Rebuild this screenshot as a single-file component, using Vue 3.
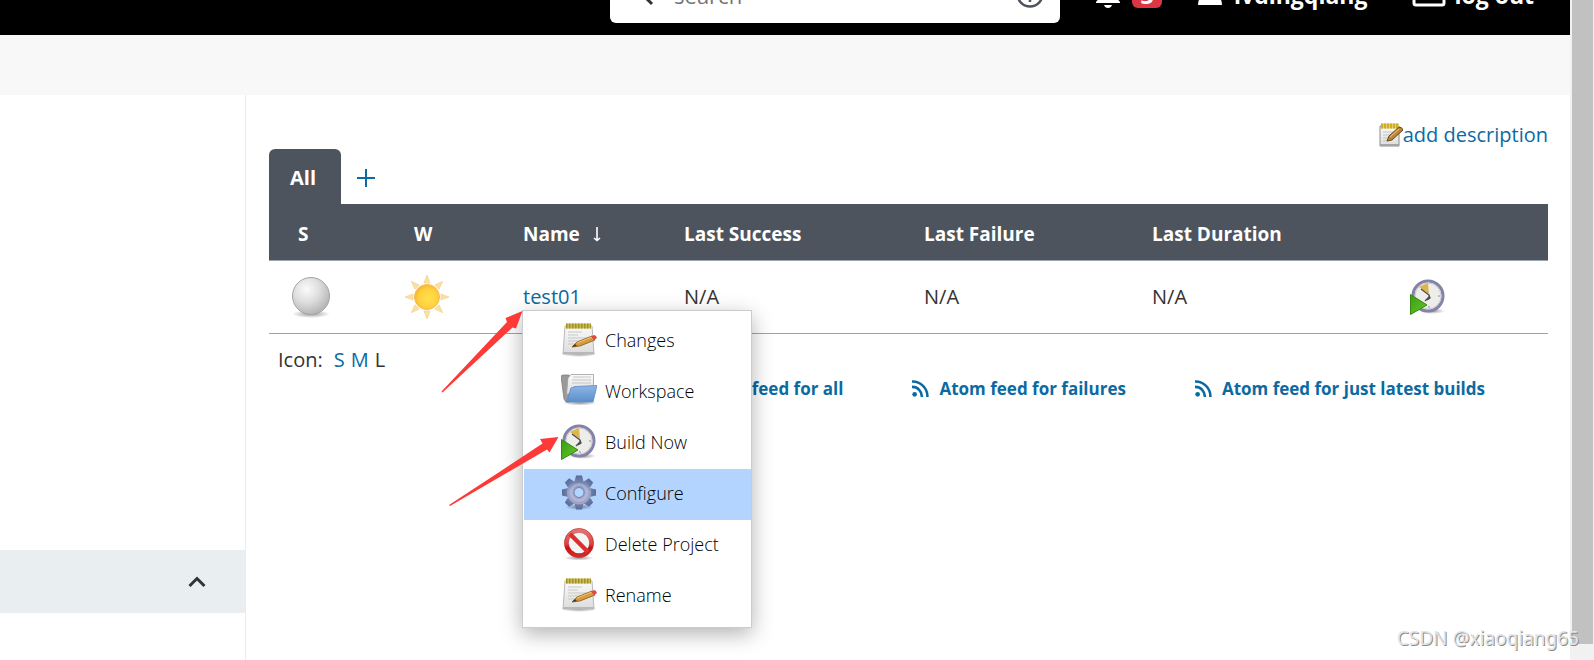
<script setup>
import { ref } from 'vue'

const search = ref('')
const activeItem = ref('Configure')

const columns = [
  { key: 's', label: 'S', icon: true },
  { key: 'w', label: 'W', icon: true },
  { key: 'name', label: 'Name', sorted: true },
  { key: 'success', label: 'Last Success' },
  { key: 'failure', label: 'Last Failure' },
  { key: 'duration', label: 'Last Duration' },
  { key: 'build', label: '' },
]

const menuItems = [
  { label: 'Changes', icon: 'notepad' },
  { label: 'Workspace', icon: 'folder' },
  { label: 'Build Now', icon: 'clock' },
  { label: 'Configure', icon: 'gear' },
  { label: 'Delete Project', icon: 'delete' },
  { label: 'Rename', icon: 'notepad' },
]

const feeds = ['Atom feed for all', 'Atom feed for failures', 'Atom feed for just latest builds']
const gearTeeth = [0, 45, 90, 135, 180, 225, 270, 315]
</script>

<template>
  <div class="page">
    <!-- shared icon shapes -->
    <svg class="defs" width="0" height="0" aria-hidden="true">
      <defs>
        <linearGradient id="paper" x1="0" y1="0" x2="0" y2="1">
          <stop offset="0" stop-color="#fafafa" />
          <stop offset="1" stop-color="#dcdcdc" />
        </linearGradient>
        <linearGradient id="folderFront" x1="0" y1="0" x2="0" y2="1">
          <stop offset="0" stop-color="#8fb6e2" />
          <stop offset="1" stop-color="#5a8fcd" />
        </linearGradient>
        <linearGradient id="green" x1="0" y1="0" x2="1" y2="1">
          <stop offset="0" stop-color="#3c9a12" />
          <stop offset="1" stop-color="#62cc2a" />
        </linearGradient>
        <linearGradient id="gearFill" x1="0" y1="0" x2="0" y2="36" gradientUnits="userSpaceOnUse">
          <stop offset="0" stop-color="#566a98" />
          <stop offset="0.45" stop-color="#9aa6cb" />
          <stop offset="1" stop-color="#aaa0c2" />
        </linearGradient>
        <linearGradient id="redRing" x1="0" y1="0" x2="0" y2="36" gradientUnits="userSpaceOnUse">
          <stop offset="0" stop-color="#e88080" />
          <stop offset="0.5" stop-color="#dc4444" />
          <stop offset="0.6" stop-color="#cc1010" />
          <stop offset="1" stop-color="#d84040" />
        </linearGradient>
        <radialGradient id="ballFill" cx="0.38" cy="0.32" r="0.7">
          <stop offset="0" stop-color="#fbfbfb" />
          <stop offset="0.5" stop-color="#dedede" />
          <stop offset="1" stop-color="#b4b4b4" />
        </radialGradient>
        <radialGradient id="sunFill" cx="0.55" cy="0.55" r="0.6">
          <stop offset="0" stop-color="#ffe14a" />
          <stop offset="0.6" stop-color="#ffd23e" />
          <stop offset="1" stop-color="#f9ae2c" />
        </radialGradient>
        <radialGradient id="shade">
          <stop offset="0" stop-color="#000" stop-opacity="0.4" />
          <stop offset="1" stop-color="#000" stop-opacity="0" />
        </radialGradient>
      </defs>

      <symbol id="notepad" viewBox="0 0 36 36">
        <ellipse cx="18" cy="32" rx="18" ry="3" fill="url(#shade)" />
        <path d="M4 4h27l2 28H2z" fill="url(#paper)" stroke="#b9b9b9" />
        <path d="M2 30h31v2H2z" fill="#b9b9b9" />
        <path d="M7 10h14M7 13h10M7 16h19M7 19h14M7 22h8" stroke="#c9c9c9" />
        <path d="M5 4h25" stroke="#c9bb55" stroke-width="5" />
        <path d="M5 4h25" stroke="#a39128" stroke-width="5" stroke-dasharray="1.500 1.500" />
        <path d="M11 25l5-5 15-6 3 4-15 6z" fill="#d79a3c" stroke="#86581b" stroke-width="0.800" />
        <path d="M16 21l15-6" stroke="#f2c675" />
        <path d="M11 25l3-3 2 2z" fill="#4a3a22" />
        <path d="M30 14.500l3-1.500q2 0 3 3l-3 2z" fill="#e04848" />
      </symbol>

      <symbol id="folder" viewBox="0 0 36 36">
        <ellipse cx="19" cy="30" rx="17" ry="2.500" fill="url(#shade)" />
        <path d="M0 3l2-1 6 0 1 2 0 25-4 0-2-3z" fill="#9a9a9a" stroke="#7e7e7e" stroke-width="0.800" />
        <path d="M7 5l3-3.500h22.500v12l-27 8z" fill="url(#paper)" stroke="#9e9e9e" stroke-width="0.800" />
        <path d="M12 4h18M11 7h19M11 10h19" stroke="#c6c6c6" />
        <path d="M10 15l4-1.500 22-1-4 16.500H5.500z" fill="url(#folderFront)" stroke="#5a8ac6" stroke-width="0.800" />
      </symbol>

      <symbol id="clock" viewBox="0 0 36 36">
        <ellipse cx="22" cy="32" rx="13" ry="3" fill="url(#shade)" />
        <circle cx="18" cy="17" r="15" fill="#ededea" stroke="#8482a6" stroke-width="3" />
        <circle cx="18" cy="17" r="13" fill="none" stroke="#c9c9d6" />
        <path d="M9 8l9-4 1 11z" fill="#dcb648" />
        <path d="M11 10l8 6 0 2-4 4M19 16l1 3-3 2" fill="none" stroke="#4d4a45" stroke-width="1.300" />
        <path d="M28 17h2M18 28h2" stroke="#8c8c8c" />
        <path d="M0.500 15.500v20L17 26z" fill="url(#green)" stroke="#378615" />
      </symbol>

      <symbol id="gear" viewBox="0 0 36 36">
        <ellipse cx="18" cy="32" rx="14" ry="3" fill="url(#shade)" />
        <g fill="url(#gearFill)">
          <path
            v-for="angle in gearTeeth"
            :key="angle"
            d="M13 9l2-8.500h6L23 9z"
            :transform="`rotate(${angle} 18 17.5)`"
          />
        </g>
        <circle cx="18" cy="17.500" r="8.500" fill="none" stroke="url(#gearFill)" stroke-width="7" />
        <circle cx="18" cy="17.500" r="8" fill="none" stroke="#c5c8e0" stroke-opacity="0.500" stroke-width="3" />
        <circle cx="18" cy="17.500" r="5" fill="none" stroke="#7584ae" />
      </symbol>

      <symbol id="delete" viewBox="0 0 36 36">
        <ellipse cx="18" cy="32" rx="15" ry="2.500" fill="url(#shade)" />
        <circle cx="18" cy="17" r="12.500" fill="#f4f4f4" stroke="url(#redRing)" stroke-width="4.500" />
        <path d="M9 8l18 18" stroke="#d63232" stroke-width="4.500" />
        <circle cx="18" cy="17" r="14.500" fill="none" stroke="#c03030" stroke-width="0.600" />
      </symbol>

      <symbol id="edit" viewBox="0 0 24 24">
        <path d="M1 3h19v20H1z" fill="url(#paper)" stroke="#8b8b8b" />
        <path d="M1 21h19v2H1z" fill="#a5a5a5" />
        <path d="M4 9h10M4 12h9M4 15h6M4 18h6" stroke="#c4c4c4" />
        <path d="M2 3h18" stroke="#e3cf72" stroke-width="5" />
        <path d="M2 3h18" stroke="#d0ad28" stroke-width="5" stroke-dasharray="2 1" />
        <path d="M8 18l2-5 10-9q3 0 4 3L13 17z" fill="#b98538" stroke="#6b4a1c" />
        <path d="M11 14l9-8" stroke="#ecc98e" />
      </symbol>

      <symbol id="feed" viewBox="0 0 16 16">
        <circle cx="2.500" cy="13.500" r="2.200" fill="currentColor" />
        <path d="M0 6.500A9 9 0 0 1 9.300 16M0 1.500A14 14 0 0 1 14.500 16" fill="none" stroke="currentColor" stroke-width="2.400" />
      </symbol>
    </svg>

    <div class="content">
      <header class="header">
        <div class="header-inner">
          <label class="search">
            <svg width="26" height="26" viewBox="0 0 26 26" fill="none" stroke="#333" stroke-width="3">
              <circle cx="10" cy="9" r="6" />
              <path d="M14 14l8 8" />
            </svg>
            <input v-model="search" type="text" placeholder="search" aria-label="search" />
            <svg width="28" height="28" viewBox="0 0 28 28" fill="none" stroke="#4d545d" stroke-width="2.500">
              <circle cx="14" cy="13" r="12.500" />
              <path d="M10 10a4 4 0 1 1 5 4l-1 2M14 18v3" />
            </svg>
          </label>
          <a href="#" class="header-link alerts">
            <svg width="24" height="28" viewBox="0 0 24 28" fill="#fff">
              <path d="M12 1a8 8 0 0 0-8 8v7l-4 5v1h24v-1l-4-5V9a8 8 0 0 0-8-8zM8 24h8q-1 3-4 3t-4-3z" />
            </svg>
            <span class="badge">3</span>
          </a>
          <a href="#" class="header-link user">
            <svg width="24" height="24" viewBox="0 0 24 24" fill="#fff">
              <circle cx="12" cy="6" r="6" />
              <path d="M0 22q0-9 8-9h8q8 0 8 9z" />
            </svg>
            lvdingqiang
          </a>
          <a href="#" class="header-link logout">
            <svg width="34" height="26" viewBox="0 0 34 26" fill="none" stroke="#fff" stroke-width="3">
              <rect x="2" y="2" width="30" height="21" rx="2" />
            </svg>
            log out
          </a>
        </div>
      </header>

      <div class="breadcrumb"></div>

      <div class="body">
        <aside class="side">
          <div class="pane-header">
            <button type="button" class="collapse" aria-label="collapse">
              <svg width="18" height="12" viewBox="0 0 18 12" fill="none" stroke="#333" stroke-width="3">
                <path d="M1.500 10L9 2.500l7.500 7.500" />
              </svg>
            </button>
          </div>
        </aside>

        <main class="main">
          <div class="description">
            <a href="#"><svg width="24" height="24"><use href="#edit" /></svg>add description</a>
          </div>

          <nav class="tabs">
            <a href="#" class="tab-active">All</a>
            <a href="#" class="tab-new" aria-label="New View">
              <svg width="18" height="18" viewBox="0 0 18 18" stroke="currentColor" stroke-width="2">
                <path d="M9 0v18M0 9h18" />
              </svg>
            </a>
          </nav>

          <table class="jobs">
            <colgroup>
              <col v-for="col in columns" :key="col.key" :class="`col-${col.key}`" />
            </colgroup>
            <thead>
              <tr>
                <th v-for="col in columns" :key="col.key" :class="{ 'th-icon': col.icon }">
                  {{ col.label }}
                  <svg v-if="col.sorted" class="sort" width="8" height="16" viewBox="0 0 8 16" fill="none" stroke="#fff">
                    <path d="M4 1v13M1 12l3 2.500L7 12" stroke-width="1.600" />
                  </svg>
                </th>
              </tr>
            </thead>
            <tbody>
              <tr>
                <td>
                  <svg width="48" height="48" viewBox="0 0 48 48">
                    <ellipse cx="24" cy="41" rx="19" ry="4" fill="url(#shade)" />
                    <circle cx="24" cy="23" r="18.500" fill="url(#ballFill)" stroke="#a4a4a4" />
                  </svg>
                </td>
                <td>
                  <svg width="48" height="48" viewBox="0 0 48 48">
                    <path
                      v-for="angle in gearTeeth"
                      :key="angle"
                      d="M24 2l3 8h-6z"
                      fill="#f9e0a4"
                      stroke="#f6d690"
                      stroke-width="0.800"
                      :transform="`rotate(${angle} 24 24)`"
                    />
                    <circle cx="24" cy="24" r="12.500" fill="url(#sunFill)" stroke="#f6bd57" />
                  </svg>
                </td>
                <td>
                  <div class="job">
                    <a href="#">test01</a>
                    <div class="menu">
                      <ul>
                        <li v-for="item in menuItems" :key="item.label">
                          <a
                            href="#"
                            :class="['menu-item', { selected: activeItem === item.label }]"
                            @mouseenter="activeItem = item.label"
                          >
                            <svg width="36" height="36"><use :href="`#${item.icon}`" /></svg>
                            {{ item.label }}
                          </a>
                        </li>
                      </ul>
                      <svg class="arrows" width="120" height="210" viewBox="0 0 120 210" fill="#fc3a38">
                        <path d="M1.500 91.500L67 22l-1.500-4 17-7L76 28.500l-3.500-1L2.500 92.500z" />
                        <path d="M9 205l93.500-61.500L100 139l18.500-2-9 15.500-2.500-3L10 206z" />
                      </svg>
                    </div>
                  </div>
                </td>
                <td>N/A</td>
                <td>N/A</td>
                <td>N/A</td>
                <td>
                  <a href="#" aria-label="Build Now"><svg width="36" height="36"><use href="#clock" /></svg></a>
                </td>
              </tr>
            </tbody>
          </table>

          <div class="sizes">
            <span>Icon:</span>
            <a href="#">S</a>
            <a href="#">M</a>
            <span>L</span>
          </div>

          <div class="feeds">
            <a v-for="feed in feeds" :key="feed" href="#">
              <svg width="17" height="17"><use href="#feed" /></svg>
              {{ feed }}
            </a>
          </div>
        </main>
      </div>
    </div>

    <div class="scrollbar"><div class="thumb"></div></div>
    <div class="watermark">CSDN @xiaoqiang65</div>
  </div>
</template>

<style>
body {
  margin: 0;
  background: #fff;
}
</style>

<style scoped>
.page {
  position: relative;
  display: flex;
  min-height: 100vh;
  overflow: hidden;
  font-family: 'Open Sans', 'Noto Sans', sans-serif;
  font-size: 20px;
  line-height: 28px;
  color: #333;
}
.page * {
  box-sizing: border-box;
}
.defs {
  position: absolute;
}
a {
  color: #0b6aa2;
  font-weight: 500;
  text-decoration: none;
}
svg {
  display: block;
  flex: none;
}
.content {
  flex: 1;
  min-width: 0;
  display: flex;
  flex-direction: column;
}

/* top bar, scrolled half out of view */
.header {
  height: 35px;
  background: #000;
  display: flex;
  align-items: flex-end;
  justify-content: flex-end;
  overflow: hidden;
}
.header-inner {
  display: flex;
  align-items: center;
  flex: none;
  height: 80px;
  padding-right: 36px;
}
.search {
  display: flex;
  align-items: center;
  width: 450px;
  height: 56px;
  padding: 0 16px 0 20px;
  background: #fff;
  border-radius: 6px;
}
.search input {
  flex: 1;
  min-width: 0;
  margin-left: 18px;
  padding: 0;
  border: none;
  outline: none;
  background: none;
  font: inherit;
  font-size: 22px;
}
.search input::placeholder {
  color: #757575;
}
.header-link {
  display: flex;
  align-items: center;
  color: #fff;
  font-size: 23px;
  font-weight: 700;
}
.alerts {
  margin-left: 36px;
  gap: 12px;
}
.user {
  margin-left: 36px;
  gap: 12px;
}
.logout {
  margin-left: 45px;
  gap: 8px;
}
.badge {
  width: 30px;
  height: 26px;
  line-height: 26px;
  text-align: center;
  border-radius: 6px;
  background: #dc3545;
}

.breadcrumb {
  height: 60px;
  background: #f8f8f8;
}
.body {
  flex: 1;
  display: flex;
}
.side {
  width: 246px;
  flex: none;
  padding-top: 455px;
  border-right: 1px solid #eaeced;
}
.pane-header {
  display: flex;
  align-items: center;
  justify-content: flex-end;
  height: 63px;
  padding-right: 39px;
  background: #e9eef1;
}
.collapse {
  padding: 0;
  border: none;
  background: none;
}
.main {
  flex: 1;
  min-width: 0;
  padding: 26px 22px 0 23px;
}
.description {
  display: flex;
  justify-content: flex-end;
}
.description a {
  display: flex;
  align-items: center;
}
.tabs {
  display: flex;
}
.tab-active {
  display: flex;
  align-items: center;
  justify-content: center;
  width: 72px;
  height: 55px;
  padding: 2px 4px 0 0;
  border-radius: 6px 6px 0 0;
  background: #4d545d;
  color: #fff;
  font-weight: 700;
}
.tab-new {
  display: flex;
  align-items: center;
  padding: 2px 16px 0;
}

.jobs {
  width: 100%;
  table-layout: fixed;
  border-collapse: collapse;
  text-align: left;
}
.col-s { width: 116px; }
.col-w { width: 120px; }
.col-name { width: 161px; }
.col-success { width: 240px; }
.col-failure { width: 228px; }
.col-duration { width: 258px; }
.jobs th {
  height: 56px;
  padding: 4px 0 0 18px;
  background: #4d545d;
  border-bottom: 1px solid #98a5b1;
  color: #fff;
  font-size: 19px;
  font-weight: 700;
}
.jobs .th-icon {
  padding-left: 29px;
}
.jobs td {
  height: 73px;
  padding: 0 0 0 18px;
  border-bottom: 1px solid #98a5b1;
}
.sort {
  display: inline-block;
  margin-left: 8px;
  vertical-align: -1px;
}
.job {
  position: relative;
}

.menu {
  position: absolute;
  z-index: 10;
  top: 27px;
  left: -1px;
  width: 230px;
  padding: 5px 0 5px 1px;
  border: 1px solid #ccc;
  background: #fff;
  box-shadow: 0 6px 20px rgba(0, 0, 0, 0.3);
}
.menu ul {
  margin: 0;
  padding: 0;
  list-style: none;
}
.menu-item {
  display: flex;
  align-items: center;
  gap: 8px;
  height: 51px;
  padding: 0 0 3px 37px;
  color: #000;
  font-size: 18px;
  font-weight: 300;
}
.selected {
  background: #b3d4ff;
}
.arrows {
  position: absolute;
  top: -11px;
  left: -83px;
  pointer-events: none;
}

.sizes {
  display: flex;
  gap: 6px;
  padding: 12px 9px 0;
}
.sizes span:first-child {
  margin-right: 5px;
}
.feeds {
  display: flex;
  justify-content: flex-end;
  gap: 69px;
  padding: 1px 63px 0 0;
  font-size: 17px;
}
.feeds a {
  display: flex;
  align-items: center;
  gap: 10px;
  font-weight: 700;
}

.scrollbar {
  width: 24px;
  flex: none;
  display: flex;
  padding: 0 1px 16px 2px;
  background: #f1f1f1;
}
.thumb {
  flex: 1;
  background: #c1c1c1;
}
.watermark {
  position: absolute;
  right: 15px;
  bottom: 8px;
  color: #e4e4e4;
  font-family: 'Noto Sans', sans-serif;
  font-size: 19px;
  text-shadow: 1px 1px 0 #8c8c8c;
}
</style>
